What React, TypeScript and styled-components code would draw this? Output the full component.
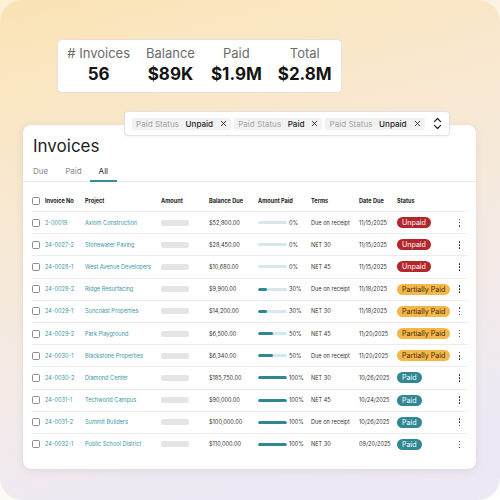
import React from "react";
import styled, { createGlobalStyle } from "styled-components";
import { X, ChevronsUpDown } from "lucide-react";

const Global = createGlobalStyle`
  html, body { margin: 0; padding: 0; }
  body {
    width: 500px; height: 500px; overflow: hidden;
    background: linear-gradient(160deg, #fdf1d8 0%, #fbf4ec 50%, #ffffff 100%);
    font-family: Inter, "Noto Sans", sans-serif;
  }
`;

const Frame = styled.div`
  width: 500px;
  height: 500px;
  box-sizing: border-box;
  border-radius: 22px;
  background: linear-gradient(165deg, #fae3b4 0%, #f9e8cf 30%, #f4ebe6 60%, #efe9f3 82%, #ede7f6 100%);
  padding: 39px 0 0 23px;
  display: flex;
  flex-direction: column;
  align-items: flex-start;
`;

const StatsCard = styled.div`
  margin-left: 34px;
  width: 285px;
  height: 54px;
  box-sizing: border-box;
  background: #fff;
  border: 1px solid #e6e2dc;
  border-radius: 5px;
  display: flex;
  justify-content: center;
  gap: 16px;
  padding-top: 5px;
`;

const Stat = styled.div`
  display: flex;
  flex-direction: column;
  align-items: center;
  gap: 3px;
`;

const StatLabel = styled.div`
  font-size: 13px;
  line-height: 16px;
  color: #6b6b6b;
  white-space: nowrap;
`;

const StatValue = styled.div`
  font-size: 17px;
  line-height: 21px;
  font-weight: 700;
  color: #141414;
  white-space: nowrap;
`;

const FilterBar = styled.div`
  position: relative;
  z-index: 2;
  margin-top: 18px;
  margin-left: 101px;
  width: 326px;
  height: 25px;
  box-sizing: border-box;
  background: #fff;
  border: 1px solid #e2e2e2;
  border-radius: 4px;
  box-shadow: 0 1px 3px rgba(0, 0, 0, 0.06);
  display: flex;
  align-items: center;
  padding: 0 7px;
  gap: 3px;
`;

const Chip = styled.div`
  height: 12px;
  background: #f2f2f2;
  border-radius: 2px;
  display: flex;
  align-items: center;
  padding: 0 3px 0 4px;
  gap: 5px;
  font-size: 8.1px;
  white-space: nowrap;
`;

const ChipKey = styled.span`
  color: #a3a3a3;
`;

const ChipValue = styled.span`
  margin-left: 1.5px;
  color: #222;
  font-weight: 500;
`;

const ChipClose = styled(X)`
  margin-left: 1px;
  color: #1a1a1a;
`;

const Expand = styled(ChevronsUpDown)`
  margin-left: 2px;
  flex-shrink: 0;
  color: #1a1a1a;
`;

const Card = styled.div`
  position: relative;
  z-index: 1;
  margin-top: -11px;
  width: 453px;
  height: 344px;
  box-sizing: border-box;
  background: #fff;
  border-radius: 8px;
  box-shadow: 0 2px 10px rgba(60, 40, 20, 0.08), 0 0 1px rgba(0, 0, 0, 0.08);
  padding: 11px 8px 0 9px;
  display: flex;
  flex-direction: column;
`;

const Title = styled.h1`
  margin: 0 0 0 1px;
  font-size: 17px;
  line-height: 20px;
  font-weight: 400;
  color: #1d1d1d;
`;

const Tabs = styled.div`
  display: flex;
  margin: 4px -8px 0 -9px;
  padding-left: 1.5px;
  border-bottom: 1px solid #e8e8e8;
`;

const Tab = styled.div<{ $active?: boolean }>`
  padding: 6px 8.5px 4px;
  line-height: 10px;
  font-size: 8px;
  color: ${(p) => (p.$active ? "#1d1d1d" : "#8a8a8a")};
  border-bottom: 2px solid ${(p) => (p.$active ? "#3b8c99" : "transparent")};
  margin-bottom: -1px;
`;

const Table = styled.div`
  margin-top: 9px;
  display: flex;
  flex-direction: column;
`;

const cols = "13px 40px 76px 48px 49px 53px 48px 38px 58px 9px 1fr";

const HeadRow = styled.div`
  display: grid;
  grid-template-columns: ${cols};
  align-items: center;
  height: 21px;
  box-sizing: border-box;
  border-bottom: 1px solid #ececec;
  font-size: 5.6px;
  font-weight: 700;
  color: #222;
`;

const Row = styled.div<{ $last?: boolean }>`
  display: grid;
  grid-template-columns: ${cols};
  align-items: center;
  height: 22.2px;
  box-sizing: border-box;
  border-bottom: 1px solid ${(p) => (p.$last ? "transparent" : "#ececec")};
  font-size: 5.6px;
  color: #333;
  white-space: nowrap;
`;

const Check = styled.div`
  width: 8px;
  height: 8px;
  box-sizing: border-box;
  border: 1px solid #8c8c8c;
  border-radius: 1.5px;
`;

const LinkText = styled.span`
  color: #4196a6;
`;

const Placeholder = styled.div`
  width: 28px;
  height: 6px;
  border-radius: 2px;
  background: #e5e5e5;
`;

const PaidCell = styled.div`
  display: flex;
  align-items: center;
  gap: 2px;
`;

const Track = styled.div`
  width: 29px;
  height: 3px;
  border-radius: 2px;
  background: #d5e8ec;
  overflow: hidden;
`;

const Fill = styled.div`
  height: 100%;
  border-radius: 2px;
  background: #2f8793;
`;

const badgeColors = {
  Unpaid: { bg: "#b3262b", fg: "#ffffff" },
  "Partially Paid": { bg: "#f6b74a", fg: "#3a2a06" },
  Paid: { bg: "#2f8894", fg: "#ffffff" },
} as const;

type Status = keyof typeof badgeColors;

const Badge = styled.span<{ $status: Status }>`
  justify-self: start;
  height: 11px;
  padding: 0 5px;
  border-radius: 6px;
  display: inline-flex;
  align-items: center;
  font-size: 7.1px;
  background: ${(p) => badgeColors[p.$status].bg};
  color: ${(p) => badgeColors[p.$status].fg};
`;

const Kebab = styled.div`
  justify-self: center;
  display: flex;
  flex-direction: column;
  gap: 1.4px;
`;

const Dot = styled.span`
  width: 1.7px;
  height: 1.7px;
  border-radius: 50%;
  background: #1a1a1a;
`;

type Inv = {
  no: string;
  project: string;
  balance: string;
  pct: number;
  terms: string;
  date: string;
  status: Status;
};

const rows: Inv[] = [
  { no: "2-00019", project: "Axiom Construction", balance: "$52,800.00", pct: 0, terms: "Due on receipt", date: "11/15/2025", status: "Unpaid" },
  { no: "24-0027-2", project: "Stonewater Paving", balance: "$28,450.00", pct: 0, terms: "NET 30", date: "11/15/2025", status: "Unpaid" },
  { no: "24-0028-1", project: "West Avenue Developers", balance: "$10,680.00", pct: 0, terms: "NET 45", date: "11/15/2025", status: "Unpaid" },
  { no: "24-0028-2", project: "Ridge Resurfacing", balance: "$9,900.00", pct: 30, terms: "Due on receipt", date: "11/18/2025", status: "Partially Paid" },
  { no: "24-0029-1", project: "Suncoast Properties", balance: "$14,200.00", pct: 30, terms: "NET 30", date: "11/18/2025", status: "Partially Paid" },
  { no: "24-0029-2", project: "Park Playground", balance: "$6,500.00", pct: 50, terms: "NET 45", date: "11/20/2025", status: "Partially Paid" },
  { no: "24-0030-1", project: "Blackstone Properties", balance: "$6,340.00", pct: 50, terms: "Due on receipt", date: "11/20/2025", status: "Partially Paid" },
  { no: "24-0030-2", project: "Diamond Center", balance: "$185,750.00", pct: 100, terms: "NET 30", date: "10/26/2025", status: "Paid" },
  { no: "24-0031-1", project: "Techworld Campus", balance: "$90,000.00", pct: 100, terms: "NET 45", date: "10/24/2025", status: "Paid" },
  { no: "24-0031-2", project: "Summit Builders", balance: "$100,000.00", pct: 100, terms: "Due on receipt", date: "10/26/2025", status: "Paid" },
  { no: "24-0032-1", project: "Public School District", balance: "$110,000.00", pct: 100, terms: "NET 30", date: "09/20/2025", status: "Paid" },
];

const stats = [
  { label: "# Invoices", value: "56" },
  { label: "Balance", value: "$89K" },
  { label: "Paid", value: "$1.9M" },
  { label: "Total", value: "$2.8M" },
];

const filters = ["Unpaid", "Paid", "Unpaid"];

export default function App() {
  return (
    <>
      <Global />
      <Frame>
        <StatsCard>
          {stats.map((s) => (
            <Stat key={s.label}>
              <StatLabel>{s.label}</StatLabel>
              <StatValue>{s.value}</StatValue>
            </Stat>
          ))}
        </StatsCard>
        <FilterBar>
          {filters.map((f, i) => (
            <Chip key={i}>
              <ChipKey>Paid Status</ChipKey>
              <ChipValue>{f}</ChipValue>
              <ChipClose size={9} strokeWidth={2.2} />
            </Chip>
          ))}
          <Expand size={15} strokeWidth={1.8} />
        </FilterBar>
        <Card>
          <Title>Invoices</Title>
          <Tabs>
            <Tab>Due</Tab>
            <Tab>Paid</Tab>
            <Tab $active>All</Tab>
          </Tabs>
          <Table>
            <HeadRow>
              <Check />
              <span>Invoice No</span>
              <span>Project</span>
              <span>Amount</span>
              <span>Balance Due</span>
              <span>Amount Paid</span>
              <span>Terms</span>
              <span>Date Due</span>
              <span>Status</span>
              <span />
            </HeadRow>
            {rows.map((r, i) => (
              <Row key={r.no} $last={i === rows.length - 1}>
                <Check />
                <LinkText>{r.no}</LinkText>
                <LinkText>{r.project}</LinkText>
                <Placeholder />
                <span>{r.balance}</span>
                <PaidCell>
                  <Track>
                    <Fill style={{ width: `${r.pct}%` }} />
                  </Track>
                  <span>{r.pct}%</span>
                </PaidCell>
                <span>{r.terms}</span>
                <span>{r.date}</span>
                <Badge $status={r.status}>{r.status}</Badge>
                <Kebab>
                  <Dot />
                  <Dot />
                  <Dot />
                </Kebab>
              </Row>
            ))}
          </Table>
        </Card>
      </Frame>
    </>
  );
}
